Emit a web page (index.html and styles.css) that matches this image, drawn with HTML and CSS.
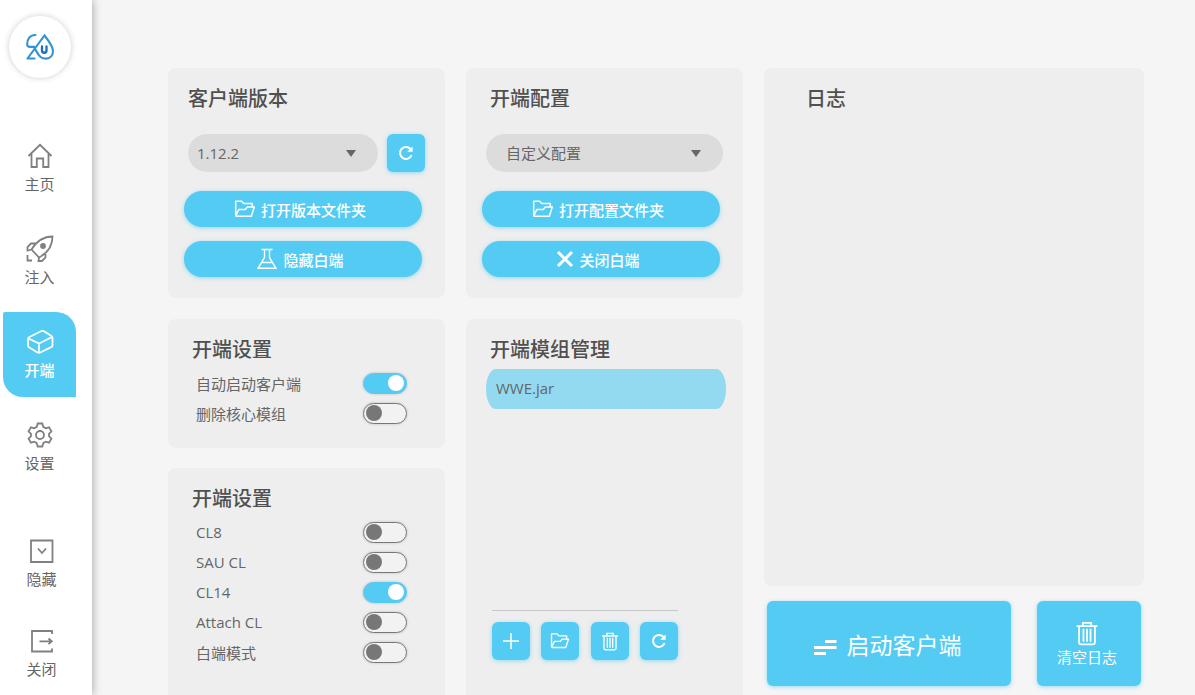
FILE: index.html
```html
<!DOCTYPE html>
<html lang="zh-CN">
<head>
<meta charset="UTF-8">
<meta name="viewport" content="width=device-width, initial-scale=1.0">
<title>开端</title>
<link rel="stylesheet" href="styles.css">
</head>
<body>
<svg class="symbols" aria-hidden="true">
    <symbol id="icon-refresh" viewBox="0 0 18 18">
        <path d="M14.6 11.2A6 6 0 1 1 13.4 4.8" fill="none" stroke="currentColor" stroke-width="2"/>
        <path d="M15.6 2.4v5.4h-5.4z" fill="currentColor"/>
    </symbol>
    <symbol id="icon-folder" viewBox="0 0 22 18">
        <path d="M1.7 16.2V1.2h6l2 2.200h8.600v3.600M1.700 16.200h15.600l3-9.200h-7l-2 2.400H4.800L1.700 16.200" fill="none" stroke="currentColor" stroke-width="1.500" stroke-linejoin="round"/>
    </symbol>
    <symbol id="icon-trash" viewBox="0 0 22 24">
        <path d="M1 5h20M7 5V1.8h8V5M3.4 5v15.4a2 2 0 0 0 2 2h11.2a2 2 0 0 0 2-2V5M7.6 7.4v12.400M11 7.400v12.400M14.400 7.400v12.400" fill="none" stroke="currentColor" stroke-width="1.7"/>
    </symbol>
</svg>

<nav class="sidebar">
    <div class="logo">
        <svg width="30" height="28" viewBox="0 0 30 28" fill="none" stroke="#2f93d6" stroke-width="2.1" stroke-linecap="round">
            <path d="M10.5 2C5 2 2 6 2.200 11.500c0 2 1 2.400 3 2.400h4"/>
            <path d="M2.500 25.500h7M2.500 25.500L19.500 2.500c4 5 8.500 11 8.500 15.500 0 5-3.500 7.600-7.500 7.600-6 0-7.500-5-11-10.500"/>
            <path d="M17 13.500v4c0 3 4.500 3 4.500 0v-4" stroke="#1c6fb8" stroke-width="2.300"/>
        </svg>
    </div>
    <div class="nav-group">
        <button class="nav-item">
            <svg width="28" height="28" viewBox="0 0 28 28"><path d="M2.500 14L14 2.800 25.500 14M5.500 11.500V25h5.300v-8.500h6.400V25h5.300V11.500"/></svg>
            <span>主页</span>
        </button>
        <button class="nav-item">
            <svg width="28" height="28" viewBox="0 0 28 28"><path d="M26.500 1.500C17 1.500 10.500 6.500 5.500 14.500l7.500 8C21.500 18 26.500 11 26.500 1.500zM10.500 8.500H5L1.500 12v3.500l4-1M19.500 17.500v5L16 26h-3.500l.5-3.500M1.500 20v5.500H6"/><circle cx="17" cy="11" r="2" fill="currentColor"/></svg>
            <span>注入</span>
        </button>
        <button class="nav-item active">
            <svg width="28" height="28" viewBox="0 0 28 28"><path d="M15.500 3L3 9.200a2 2 0 0 0-1 2v6.300a2 2 0 0 0 1 1.700l8.500 5.300a3 3 0 0 0 2.700 0l11-5.300a2 2 0 0 0 1.300-2V9.500a2 2 0 0 0-1-1.500l-8-5a2 2 0 0 0-2 0zM2.500 10.500L13 15.500l13-6.500M13 15.500v9"/></svg>
            <span>开端</span>
        </button>
        <button class="nav-item">
            <svg width="28" height="28" viewBox="0 0 28 28"><path d="M11.700 2.500h4.600l1 3.400 2.400 1.400 3.400-.9 2.300 4-2.400 2.500v2.200l2.400 2.500-2.300 4-3.400-.9-2.400 1.400-1 3.400h-4.600l-1-3.400-2.400-1.400-3.400.9-2.300-4L5 15.100v-2.200l-2.400-2.500 2.300-4 3.400.9 2.400-1.400z"/><circle cx="14" cy="14" r="4"/></svg>
            <span>设置</span>
        </button>
    </div>
    <div class="nav-group window-group">
        <button class="nav-item">
            <svg width="28" height="28" viewBox="0 0 28 28"><path d="M3 3.500h21.500v21.500H3zM10 11.500l4 4.500 4-4.500"/></svg>
            <span>隐藏</span>
        </button>
        <button class="nav-item">
            <svg width="28" height="28" viewBox="0 0 28 28"><path d="M24 7V4H4v20.500h20v-3M11.500 14.300h12M20.500 11.500l3.300 2.800-3.300 2.800"/></svg>
            <span>关闭</span>
        </button>
    </div>
</nav>

<main class="content">
    <div class="column">
        <section class="card picker-card">
            <div class="picker-top">
                <h2 class="card-title">客户端版本</h2>
                <div class="picker-row">
                    <div class="select-box">
                        <select class="version-select" aria-label="客户端版本">
                            <option>1.12.2</option>
                        </select>
                    </div>
                    <button class="icon-btn" aria-label="刷新版本"><svg width="18" height="18"><use href="#icon-refresh"/></svg></button>
                </div>
            </div>
            <div class="pills">
                <button class="pill"><svg width="22" height="18"><use href="#icon-folder"/></svg>打开版本文件夹</button>
                <button class="pill">
                    <svg width="22" height="22" viewBox="0 0 22 22" fill="none" stroke="currentColor" stroke-width="1.4"><path d="M5.500 1.500h11M8.500 1.500v8L2 20.300h18L13.500 9.500v-8M5.500 14.500h11"/></svg>隐藏白端
                </button>
            </div>
        </section>

        <section class="card">
            <h2 class="card-title">开端设置</h2>
            <div class="options">
                <label class="option">自动启动客户端<input type="checkbox" class="switch" checked></label>
                <label class="option">删除核心模组<input type="checkbox" class="switch"></label>
            </div>
        </section>

        <section class="card fill">
            <h2 class="card-title">开端设置</h2>
            <div class="options">
                <label class="option">CL8<input type="checkbox" class="switch"></label>
                <label class="option">SAU CL<input type="checkbox" class="switch"></label>
                <label class="option">CL14<input type="checkbox" class="switch" checked></label>
                <label class="option">Attach CL<input type="checkbox" class="switch"></label>
                <label class="option">白端模式<input type="checkbox" class="switch"></label>
            </div>
        </section>
    </div>

    <div class="column">
        <section class="card picker-card">
            <h2 class="card-title">开端配置</h2>
            <div class="picker-row config-row">
                <div class="select-box">
                    <select class="config-select" aria-label="开端配置">
                        <option>自定义配置</option>
                    </select>
                </div>
            </div>
            <div class="pills">
                <button class="pill"><svg width="22" height="18"><use href="#icon-folder"/></svg>打开配置文件夹</button>
                <button class="pill">
                    <svg width="18" height="18" viewBox="0 0 18 18" fill="none" stroke="currentColor" stroke-width="3"><path d="M2 2l14 14M16 2L2 16"/></svg>关闭白端
                </button>
            </div>
        </section>

        <section class="card fill mods">
            <h2 class="card-title">开端模组管理</h2>
            <ul class="mod-list">
                <li class="mod">WWE.jar</li>
            </ul>
            <div class="toolbar">
                <button class="icon-btn" aria-label="添加"><svg width="18" height="18" viewBox="0 0 18 18" fill="none" stroke="currentColor" stroke-width="1.500"><path d="M9 1v16M1 9h16"/></svg></button>
                <button class="icon-btn" aria-label="打开文件夹"><svg width="20" height="18"><use href="#icon-folder"/></svg></button>
                <button class="icon-btn" aria-label="删除"><svg width="18" height="19"><use href="#icon-trash"/></svg></button>
                <button class="icon-btn" aria-label="刷新"><svg width="18" height="18"><use href="#icon-refresh"/></svg></button>
            </div>
        </section>
    </div>

    <div class="column log-column">
        <section class="card fill log">
            <h2 class="card-title">日志</h2>
        </section>
        <div class="actions">
            <button class="launch">
                <svg width="24" height="24" viewBox="0 0 24 24" fill="currentColor"><path d="M12 8h11.500v3H12zM1 14h22.500v3H1zM1 20h12v3H1z"/></svg>启动客户端
            </button>
            <button class="clear"><svg width="24" height="25"><use href="#icon-trash"/></svg>清空日志</button>
        </div>
    </div>
</main>
</body>
</html>
```

FILE: styles.css
```css
* {
    box-sizing: border-box;
}

body {
    margin: 0;
    display: flex;
    height: 100vh;
    overflow: hidden;
    background: #f5f5f5;
    color: #666;
    font-family: "Open Sans", "Noto Sans CJK SC", sans-serif;
    font-size: 15px;
}

button,
select {
    border: 0;
    padding: 0;
    font: inherit;
    color: inherit;
    background: none;
    cursor: pointer;
}

.symbols {
    display: none;
}

/* sidebar */
.sidebar {
    flex: none;
    width: 92px;
    padding: 16px 0 0 3px;
    background: #fff;
    box-shadow: 1px 0 8px rgba(0, 0, 0, 0.3);
}

.logo {
    display: flex;
    align-items: center;
    justify-content: center;
    width: 62px;
    height: 62px;
    margin: 0 0 48px 6px;
    border-radius: 50%;
    box-shadow: 0 0 6px rgba(0, 0, 0, 0.2);
}

.nav-group {
    display: flex;
    flex-direction: column;
    gap: 8px;
}

.window-group {
    gap: 5px;
    margin-top: 31px;
    padding-left: 2px;
}

.nav-item {
    display: flex;
    flex-direction: column;
    align-items: center;
    width: 73px;
    height: 85px;
    padding-top: 16px;
    line-height: 29px;
}

.nav-item svg {
    flex: none;
    fill: none;
    stroke: currentColor;
    stroke-width: 1.8;
    color: #808080;
}

.nav-item.active {
    color: #fff;
    font-weight: 500;
    background: #54cbf3;
    border-radius: 2px 20px 0 20px;
}

.nav-item.active svg {
    color: #fff;
}

/* columns */
.content {
    flex: 1;
    display: grid;
    grid-template-columns: 277fr 277fr 380fr;
    gap: 21px;
    padding: 68px 51px 0 76px;
}

.column {
    display: flex;
    flex-direction: column;
    gap: 20px;
    min-width: 0;
}

.card {
    padding: 16px 20px 20px 16px;
    background: #eee;
    border-radius: 8px;
}

.fill {
    flex: 1;
    border-radius: 8px 8px 0 0;
}

.picker-card {
    margin-bottom: 1px;
    padding-bottom: 21px;
}

.card-title {
    margin: 0;
    padding-left: 8px;
    font-size: 20px;
    font-weight: 500;
    line-height: 30px;
    color: #505050;
}

.picker-top {
    padding-left: 4px;
}

.picker-top .card-title {
    padding-left: 0;
}

.picker-row {
    display: flex;
    gap: 9px;
    margin: 20px 0 19px;
}

.config-row {
    padding-left: 4px;
}

.select-box {
    position: relative;
    flex: 1;
}

.select-box select {
    appearance: none;
    width: 100%;
    height: 38px;
    padding-left: 9px;
    border-radius: 19px;
    background: #dcdcdc;
}

.select-box .config-select {
    padding-left: 20px;
}

.select-box::after {
    content: "";
    position: absolute;
    top: 16px;
    right: 22px;
    border: 5px solid transparent;
    border-top: 7px solid #666;
    border-bottom: 0;
    pointer-events: none;
}

.icon-btn,
.pill,
.launch,
.clear {
    display: flex;
    align-items: center;
    justify-content: center;
    color: #fff;
    background: #54cbf3;
    box-shadow: 0 1px 4px rgba(84, 203, 243, 0.6);
}

.icon-btn {
    flex: none;
    width: 38px;
    height: 38px;
    border-radius: 6px;
}

.pills {
    display: flex;
    flex-direction: column;
    gap: 14px;
    padding-right: 3px;
}

.pill {
    gap: 5px;
    height: 36px;
    padding-right: 6px;
    border-radius: 18px;
    font-weight: 500;
}

/* switches */
.options {
    padding: 3px 18px 0 12px;
}

.option {
    display: flex;
    align-items: center;
    justify-content: space-between;
    height: 30px;
}

.switch {
    appearance: none;
    display: flex;
    align-items: center;
    width: 44px;
    height: 21px;
    margin: 0;
    padding: 0 2px;
    border: 1px solid #777;
    border-radius: 11px;
    background: #f2f2f2;
    box-shadow: 0 0 3px rgba(0, 0, 0, 0.2);
}

.switch::before {
    content: "";
    width: 16px;
    height: 16px;
    border-radius: 50%;
    background: #777;
}

.switch:checked {
    justify-content: flex-end;
    border-color: #54cbf3;
    background: #54cbf3;
}

.switch:checked::before {
    background: #fff;
}

/* mods */
.mods {
    display: flex;
    flex-direction: column;
    padding-bottom: 35px;
}

.mod-list {
    flex: 1;
    margin: 4px -3px 0 0;
    padding: 0 0 0 4px;
    list-style: none;
}

.mod {
    height: 40px;
    padding-left: 10px;
    line-height: 38px;
    border-radius: 10px / 20px;
    background: #93daf1;
}

.toolbar {
    display: flex;
    justify-content: space-between;
    width: 186px;
    margin-left: 10px;
    padding-top: 11px;
    border-top: 1px solid #c8c8c8;
}

/* log */
.log-column {
    gap: 15px;
    padding-bottom: 9px;
}

.log {
    padding-left: 34px;
    border-radius: 8px;
}

.actions {
    display: flex;
    gap: 26px;
    padding: 0 3px;
}

.launch,
.clear {
    height: 85px;
    padding-right: 4px;
    border-radius: 6px;
}

.launch {
    flex: 1;
    gap: 10px;
    font-size: 23px;
}

.clear {
    flex-direction: column;
    width: 104px;
}
```
